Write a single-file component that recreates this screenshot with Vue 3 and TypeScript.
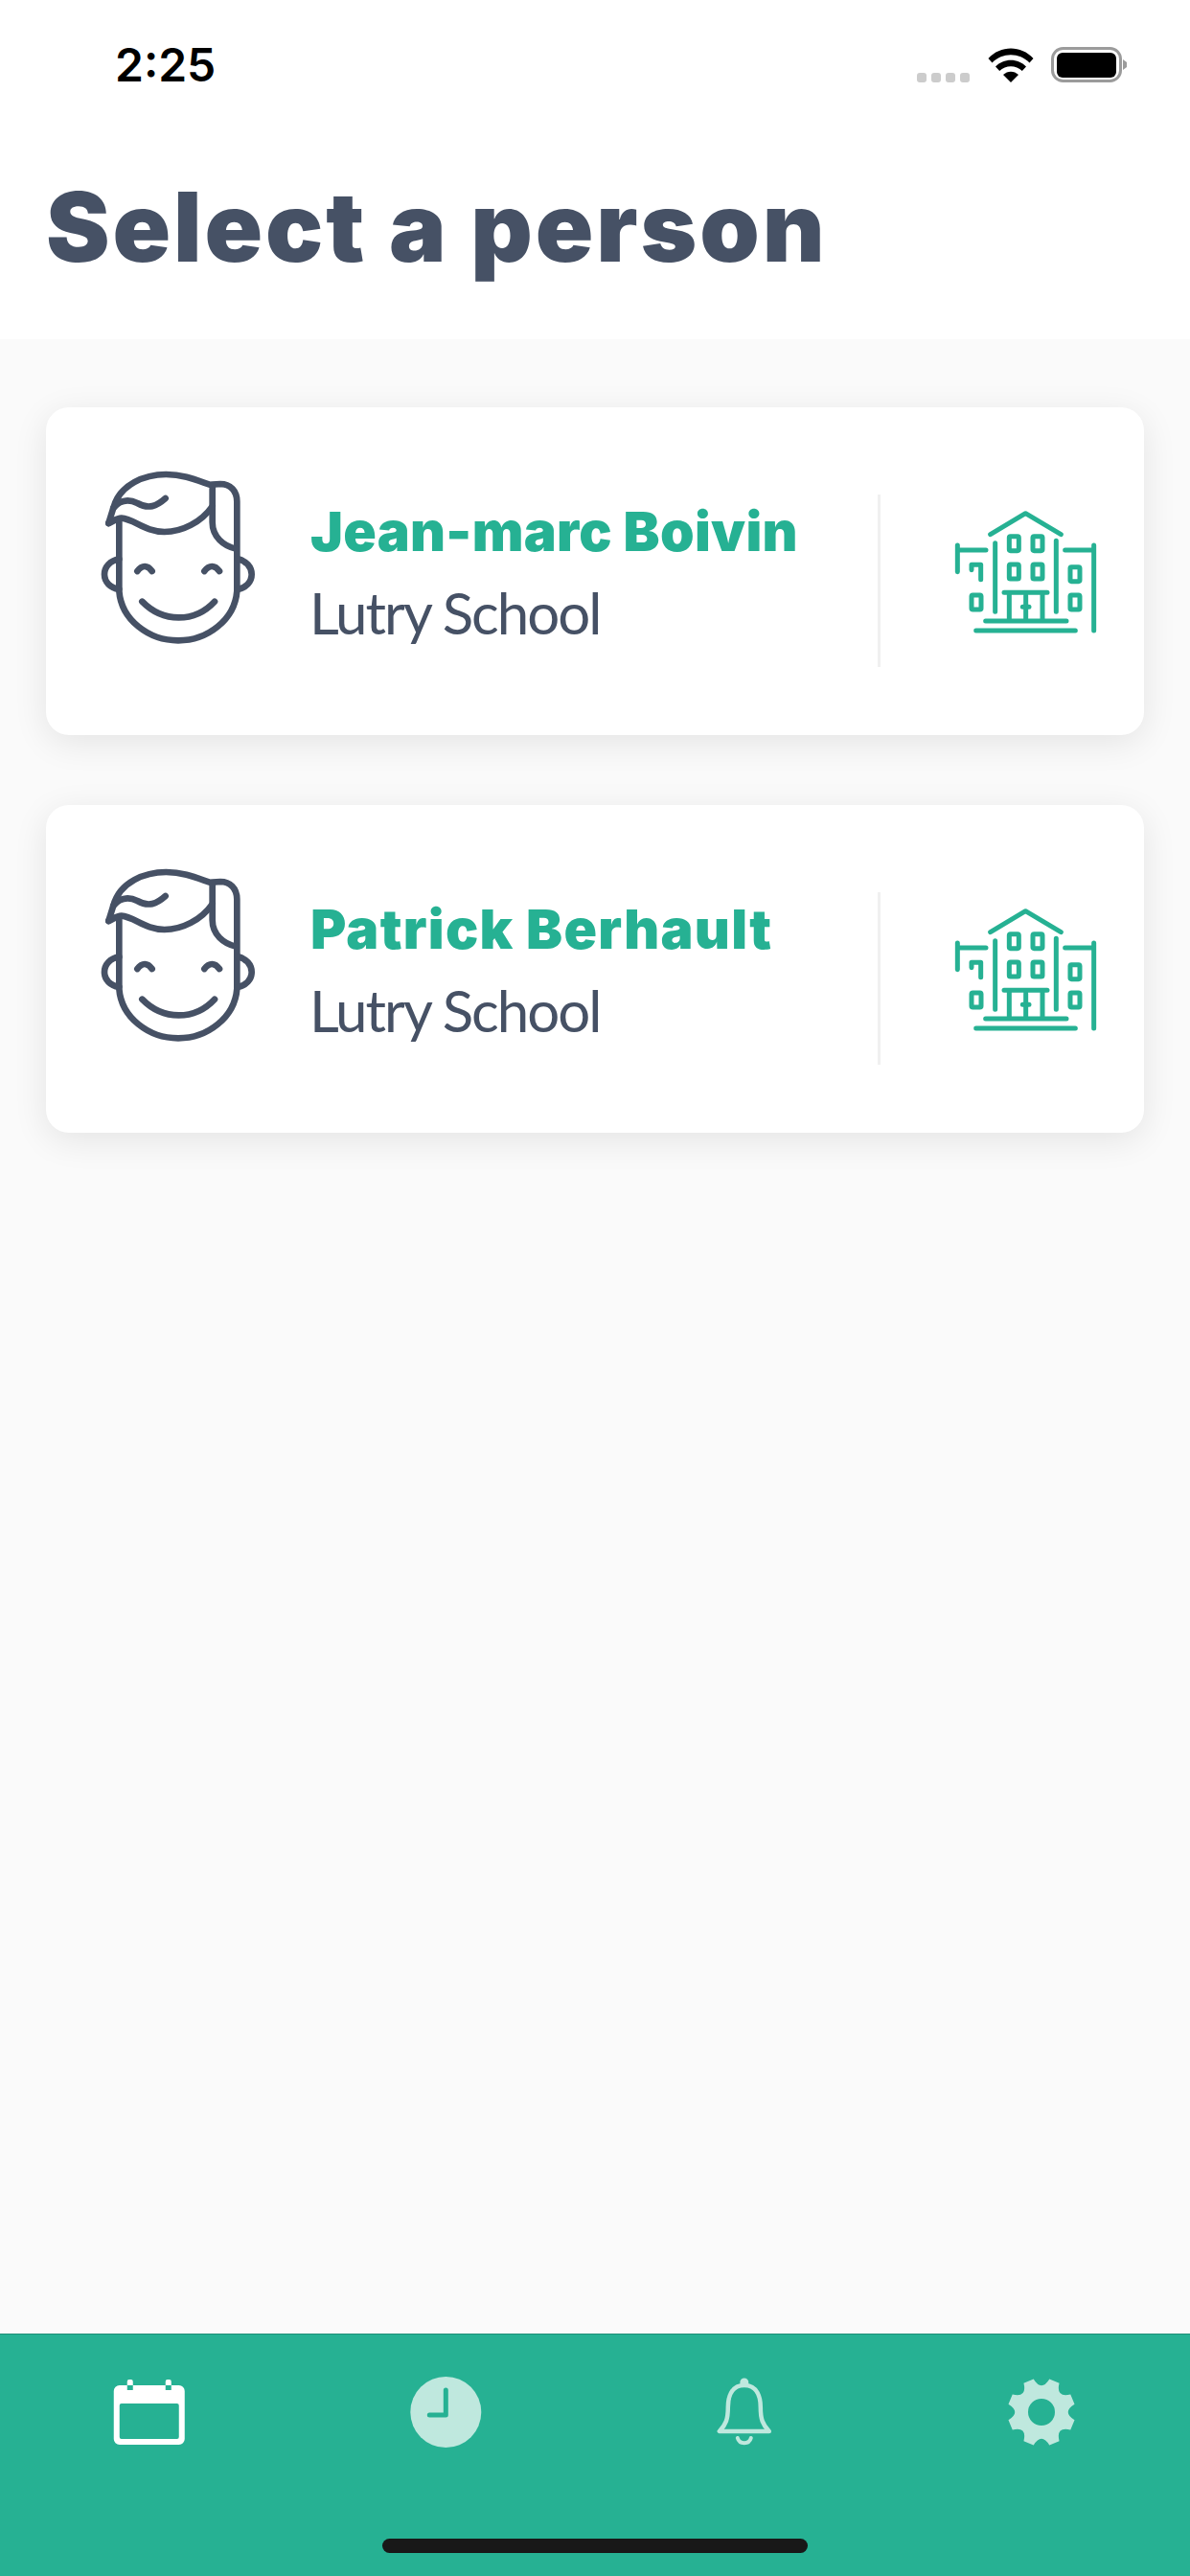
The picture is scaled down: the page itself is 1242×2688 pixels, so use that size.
<template>
  <div class="screen">
    <header class="top">
      <div class="status">
        <span class="status__time">2:25</span>
        <div class="status__icons">
          <span class="signal" aria-hidden="true"><i></i><i></i><i></i><i></i></span>
          <svg class="wifi" viewBox="0 0 48 36" aria-hidden="true">
            <path d="M0.5 11 C13 -3 35 -3 47.500 11 L43.500 15.500 C33 4.500 15 4.500 4.500 15.500 Z" />
            <path d="M8 19.500 C16.500 10.500 31.500 10.500 40 19.500 L35.800 24 C29.500 17.500 18.500 17.500 12.200 24 Z" />
            <path d="M16 28 C20.500 23.500 27.500 23.500 32 28 L24 36 Z" />
          </svg>
          <svg class="battery" viewBox="0 0 80 37" aria-hidden="true">
            <rect x="1.500" y="1.500" width="71" height="34" rx="11" fill="none" stroke="#9b9b9b" stroke-width="3" />
            <rect x="6" y="6" width="62" height="26" rx="6" fill="#000" />
            <path d="M75 13 L79 16 L79 21 L75 24 Z" fill="#9b9b9b" />
          </svg>
        </div>
      </div>
      <h1 class="title">Select a person</h1>
    </header>

    <main class="list">
      <article v-for="person in people" :key="person.name" class="card">
        <svg class="face" viewBox="0 0 660 660" aria-hidden="true">
          <path d="M133 225 L133 440 C140 530 225 595 318 595 C410 595 495 530 502 440 L502 160 C502 125 480 105 450 105 L425 107" />
          <path d="M100 228 L115 180 C135 105 215 75 280 75 C340 75 380 95 425 110 L425 225 C425 270 460 300 500 308" />
          <path d="M425 175 C390 225 330 255 275 255 C215 255 180 215 140 212 C125 212 110 225 100 228" />
          <path d="M115 180 C140 150 170 155 190 165 C225 185 250 175 278 150" />
          <path d="M133 340 C105 345 87 365 87 388 C87 412 105 430 133 435" />
          <path d="M505 340 C530 345 548 365 548 388 C548 412 530 430 505 435" />
          <path d="M190 378 C205 358 222 358 236 378" />
          <path d="M400 378 C415 358 433 358 447 378" />
          <path d="M205 473 C270 540 370 540 432 473" />
        </svg>
        <div class="info">
          <div class="info__name" :style="{ letterSpacing: person.tracking + 'px' }">{{ person.name }}</div>
          <div class="info__school">Lutry School</div>
        </div>
        <div class="divider"></div>
        <svg class="school" viewBox="100 60 470 400" aria-hidden="true">
          <path d="M222 143 L332 77 L443 143" />
          <path d="M237 170 L237 385 M428 163 L428 385" />
          <rect x="281" y="149" width="30" height="45" rx="4" />
          <rect x="355" y="149" width="30" height="45" rx="4" />
          <rect x="281" y="237" width="30" height="45" rx="4" />
          <rect x="355" y="237" width="30" height="45" rx="4" />
          <path d="M265 325 L400 325 M281 325 L281 410 M385 325 L385 410 M333 335 L333 410 M323 370 L343 370" />
          <path d="M207 414 L460 414 M177 444 L488 444" />
          <path d="M119 177 L119 260 M119 192 L208 192 M163 254 L163 238 L192 238 L192 284" />
          <rect x="163" y="333" width="30" height="45" rx="4" />
          <path d="M456 192 L546 192 M546 177 L546 444" />
          <rect x="472" y="245" width="30" height="45" rx="4" />
          <rect x="472" y="333" width="30" height="45" rx="4" />
        </svg>
      </article>
    </main>

    <nav class="tabs">
      <div class="tab">
        <svg class="tab__icon" viewBox="0 0 80 80" aria-hidden="true">
          <path
            fill="#fff"
            fill-rule="evenodd"
            d="M9.750 11 H71.750 A6 6 0 0 1 77.750 17 V67 A6 6 0 0 1 71.750 73 H9.750 A6 6 0 0 1 3.750 67 V17 A6 6 0 0 1 9.750 11 Z M11.750 30 A2 2 0 0 0 9.750 32 V65 A2 2 0 0 0 11.750 67 H69.750 A2 2 0 0 0 71.750 65 V32 A2 2 0 0 0 69.750 30 Z"
          />
          <rect x="17.750" y="5" width="6" height="12" rx="2" fill="#fff" />
          <rect x="57.750" y="5" width="6" height="12" rx="2" fill="#fff" />
          <rect x="17.750" y="11" width="6" height="5" fill="#26b193" />
          <rect x="57.750" y="11" width="6" height="5" fill="#26b193" />
        </svg>
      </div>
      <div class="tab">
        <svg class="tab__icon" viewBox="0 0 80 80" aria-hidden="true">
          <circle cx="39.300" cy="39" r="37" fill="#bfe8de" />
          <path d="M39.300 16 V42 H22.300" fill="none" stroke="#26b193" stroke-width="5" stroke-linecap="round" stroke-linejoin="round" />
        </svg>
      </div>
      <div class="tab">
        <svg class="tab__icon" viewBox="0 0 80 80" aria-hidden="true">
          <circle cx="40.800" cy="8" r="4.500" fill="#bfe8de" />
          <path
            d="M40.800 11 C26.800 11 23.800 24 23.800 34 C23.800 46 21.800 52 14.800 59 H66.800 C59.800 52 57.800 46 57.800 34 C57.800 24 54.800 11 40.800 11 Z"
            fill="none"
            stroke="#bfe8de"
            stroke-width="4.500"
            stroke-linejoin="round"
          />
          <path d="M33.800 66 C35.800 73 45.800 73 47.800 66" fill="none" stroke="#bfe8de" stroke-width="4" stroke-linecap="round" />
        </svg>
      </div>
      <div class="tab">
        <svg class="tab__icon" viewBox="-40 -39 80 80" aria-hidden="true">
          <path :d="gearPath" fill="#bfe8de" fill-rule="evenodd" />
        </svg>
      </div>
    </nav>
    <div class="home-bar"></div>
  </div>
</template>

<script setup lang="ts">
interface Person {
  name: string
  tracking: number
}

const people: Person[] = [
  { name: 'Jean-marc Boivin', tracking: 0.3 },
  { name: 'Patrick Berhault', tracking: 1.3 },
]

// eight teeth with scooped gaps between them, plus the centre hole
function buildGear(): string {
  const outer = 35.5
  const scoop = 21
  const half = (9 * Math.PI) / 180
  const pt = (r: number, a: number) => `${(r * Math.cos(a)).toFixed(2)} ${(r * Math.sin(a)).toFixed(2)}`
  let d = ''
  for (let i = 0; i < 8; i++) {
    const mid = ((22.5 + i * 45) * Math.PI) / 180
    const next = mid + Math.PI / 4
    d += `${i === 0 ? 'M' : 'L'}${pt(outer, mid - half)} L${pt(outer, mid + half)} `
    d += `Q${pt(scoop, mid + Math.PI / 8)} ${pt(outer, next - half)} `
  }
  return `${d}Z M14 0 A14 14 0 1 0 -14 0 A14 14 0 1 0 14 0 Z`
}

const gearPath = buildGear()
</script>

<style scoped>
.screen {
  position: relative;
  display: flex;
  flex-direction: column;
  width: 1242px;
  height: 2688px;
  overflow: hidden;
  background: #fafafa;
  font-family: Lato, "Noto Sans", sans-serif;
}

.top {
  height: 354px;
  background: #fff;
}

.status {
  display: flex;
  align-items: flex-start;
  justify-content: space-between;
  height: 176px;
  padding: 49px 65px 0 120px;
  box-sizing: border-box;
}

.status__time {
  font-family: Inter, sans-serif;
  font-size: 48px;
  font-weight: 600;
  line-height: 37px;
  color: #000;
}

.status__icons {
  display: flex;
  align-items: flex-end;
  height: 37px;
}

.signal {
  display: flex;
  gap: 5px;
  margin-right: 19px;
}

.signal i {
  width: 10px;
  height: 10px;
  border-radius: 3px;
  background: #cccccc;
}

.wifi {
  width: 48px;
  height: 36px;
  margin-right: 18px;
}

.battery {
  width: 80px;
  height: 37px;
}

.title {
  margin: 0;
  padding-left: 48px;
  font-family: Inter, sans-serif;
  font-size: 100px;
  font-weight: 900;
  line-height: 122px;
  letter-spacing: 2.9px;
  color: #465165;
}

.list {
  display: flex;
  flex: 1;
  flex-direction: column;
  gap: 73px;
  padding: 71px 48px 0;
}

.card {
  display: flex;
  align-items: flex-start;
  height: 342px;
  border-radius: 24px;
  background: #fff;
  box-shadow: 0 8px 36px rgba(0, 0, 0, 0.09);
}

.face {
  flex-shrink: 0;
  width: 220px;
  height: 220px;
  margin: 45px 0 0 32px;
  fill: none;
  stroke: #465165;
  stroke-width: 20;
  stroke-linecap: round;
  stroke-linejoin: round;
}

.info {
  flex: 1;
  margin: 96px 0 0 24px;
}

.info__name {
  font-family: Inter, sans-serif;
  font-size: 57px;
  font-weight: 900;
  line-height: 68px;
  color: #26b193;
}

.info__school {
  margin: 16px 0 0 -1px;
  font-size: 60px;
  font-weight: 400;
  line-height: 68px;
  letter-spacing: -2px;
  color: #465165;
}

.divider {
  flex-shrink: 0;
  width: 3px;
  height: 180px;
  margin-top: 91px;
  background: #f0f0f0;
}

.school {
  flex-shrink: 0;
  width: 156.667px;
  height: 133.333px;
  margin: 105px 44px 0 74px;
  fill: none;
  stroke: #26b193;
  stroke-width: 15;
  stroke-linecap: round;
  stroke-linejoin: round;
}

.tabs {
  display: grid;
  grid-template-columns: repeat(4, 1fr);
  height: 253px;
  padding-top: 42px;
  box-sizing: border-box;
  border-top: 1px solid #1f8f78;
  background: #26b193;
}

.tab {
  display: flex;
  justify-content: center;
}

.tab__icon {
  width: 80px;
  height: 80px;
}

.home-bar {
  position: absolute;
  left: 399px;
  bottom: 24px;
  width: 444px;
  height: 15px;
  border-radius: 8px;
  background: #181818;
}
</style>
